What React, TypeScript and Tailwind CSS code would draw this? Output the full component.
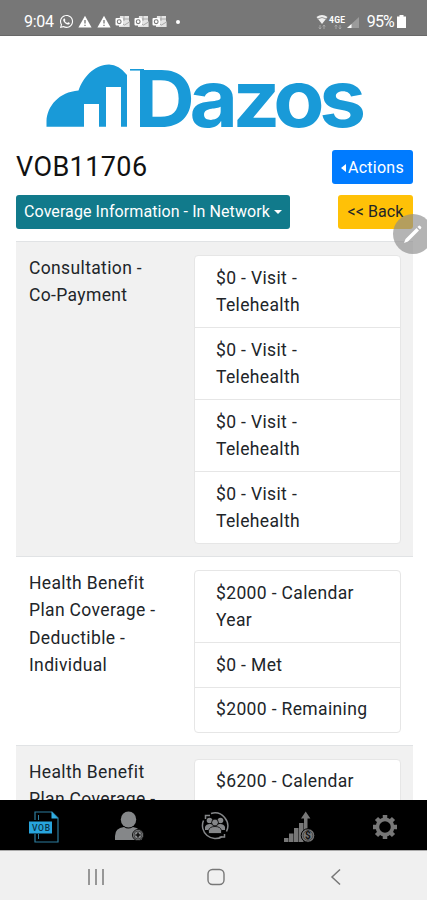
import clsx from "clsx";
import { FaWhatsapp } from "react-icons/fa";

const rows = [
  {
    lines: ["Consultation -", "Co-Payment"],
    items: [
      ["$0 - Visit -", "Telehealth"],
      ["$0 - Visit -", "Telehealth"],
      ["$0 - Visit -", "Telehealth"],
      ["$0 - Visit -", "Telehealth"],
    ],
  },
  {
    lines: ["Health Benefit", "Plan Coverage -", "Deductible -", "Individual"],
    items: [["$2000 - Calendar", "Year"], ["$0 - Met"], ["$2000 - Remaining"]],
  },
  {
    lines: ["Health Benefit", "Plan Coverage -"],
    items: [["$6200 - Calendar"]],
  },
];

export default function App() {
  return (
    <div className="relative flex h-[900px] w-full flex-col overflow-hidden bg-white font-['Roboto',sans-serif] text-[#212529]">
      <StatusBar />
      <main className="flex min-h-0 flex-1 flex-col overflow-hidden px-4">
        <Logo />
        <div className="mt-[21px] flex h-[34px] shrink-0 items-center justify-between">
          <h1 className="text-[27px] leading-[34px] font-normal tracking-[0.4px] text-[#111]">
            VOB11706
          </h1>
          <button className="-mr-0.5 flex h-[34px] w-[81px] items-center justify-center gap-[2px] rounded-[3px] bg-[#007bff] pt-px text-base tracking-[0.25px] text-white">
            <span className="border-y-[4px] border-r-[5px] border-y-transparent border-r-white" />
            Actions
          </button>
        </div>
        <div className="mt-[11px] flex h-[34px] shrink-0 justify-between">
          <button className="flex w-[274px] items-center justify-center gap-1 rounded-[3px] bg-[#117a8b] text-base tracking-[0.08px] whitespace-nowrap text-white">
            Coverage Information - In Network
            <span className="border-x-[4px] border-t-[4px] border-x-transparent border-t-white" />
          </button>
          <button className="-mr-0.5 w-[75px] rounded-[3px] bg-[#ffc107] text-base tracking-[0.1px] text-[#212529]">
            &lt;&lt; Back
          </button>
        </div>
        <div className="mt-3 -mr-0.5 flex flex-col">
          {rows.map((row, i) => (
            <CoverageRow key={i} {...row} striped={i % 2 === 0} />
          ))}
        </div>
      </main>
      <TabBar />
      <SystemNav />
      <div className="absolute top-[214px] left-[393px] flex size-10 items-center justify-center rounded-full bg-[#8c8c8c]/65">
        <svg width="20" height="20" viewBox="0 0 20 20" fill="#fff">
          <path d="M1 19l1.500-4L13.500 4l2.500 2.500L5 17.500z M14.500 3l1-1a1.200 1.200 0 0 1 1.700 0l.8.8a1.200 1.200 0 0 1 0 1.700L17 5.500z" />
        </svg>
      </div>
    </div>
  );
}

const CoverageRow = ({
  lines,
  items,
  striped,
}: {
  lines: string[];
  items: string[][];
  striped: boolean;
}) => {
  return (
    <div
      className={clsx(
        "flex shrink-0 border-t border-[#e1e3e5] text-[17.5px] leading-[27.2px] tracking-[0.36px]",
        striped && "bg-[#f1f1f1]"
      )}
    >
      <div className="w-[178px] shrink-0 pt-[13px] pl-[13px]">
        {lines.map((line) => (
          <div key={line}>{line}</div>
        ))}
      </div>
      <div className="mt-[13.3px] mr-3 mb-[11.8px] flex-1 rounded-[4px] border border-[#e6e6e6] bg-white">
        {items.map((item, i) => (
          <div
            key={i}
            className={clsx(
              "py-[8.3px] pl-[21px]",
              i > 0 && "border-t border-[#e6e6e6]"
            )}
          >
            {item.map((line) => (
              <div key={line} className="whitespace-nowrap">
                {line}
              </div>
            ))}
          </div>
        ))}
      </div>
    </div>
  );
};

const Warning = () => (
  <svg width="14" height="13" viewBox="0 0 14 13">
    <path d="M7 .8L13.6 12.5H.4z" fill="#fff" />
    <path d="M7 5v3.5M7 9.7v1.4" stroke="#777" strokeWidth="1.3" />
  </svg>
);

const OutlookMail = () => (
  <svg width="15" height="13" viewBox="0 0 15 13">
    <path d="M5 1h9v5l.6 1v5H4V9z" fill="#e4e4e4" />
    <path d="M4.5 7l5 3 5-3M9 1v5M5 4h9" stroke="#999" strokeWidth=".8" fill="none" />
    <rect x=".5" y="3" width="7.5" height="7.5" rx="1" fill="#fff" />
    <circle cx="4.2" cy="6.7" r="1.9" fill="none" stroke="#777" strokeWidth="1.1" />
  </svg>
);

const StatusBar = () => {
  return (
    <div className="flex h-9 shrink-0 items-center justify-between border-b border-[#686868] bg-[#777] pt-2 pr-[21px] pl-6 text-white">
      <div className="flex items-center">
        <span className="w-[35px] text-[16px] leading-5 tracking-[-0.3px]">9:04</span>
        <FaWhatsapp className="size-[15px]" />
        <div className="ml-[4px] flex items-center gap-[4.5px]">
          <Warning />
          <Warning />
          <div className="flex gap-[3.5px]">
            <OutlookMail />
            <OutlookMail />
            <OutlookMail />
          </div>
        </div>
        <span className="ml-[9px] size-1 rounded-full bg-white" />
      </div>
      <div className="flex items-center">
        <svg width="46" height="16" viewBox="0 0 46 16">
          <path d="M.5 3Q6-1 11.500 3L6 10z" fill="#eee" />
          <path d="M1.500 5Q6 2 10.500 5" stroke="#999" fill="none" />
          <path
            d="M4 11v4M2.800 13.500L4 15l1.200-1.500M8 15v-4M6.800 12.500L8 11l1.200 1.500M20 15v-4M24 11v4M18.800 12.500l1.200-1.500 1.200 1.500M22.800 13.500L24 15l1.200-1.500"
            stroke="#aaa"
            strokeWidth=".9"
            fill="none"
          />
          <text x="13" y="8.500" fontSize="8.5" fontWeight="700" fill="#fff" textLength="16">
            4GE
          </text>
          <path d="M43 3v11H31z" fill="#9b9b9b" />
          <path d="M35.500 10v4H31z" fill="#fff" />
        </svg>
        <span className="ml-[5px] text-[16px] leading-5 tracking-[-0.8px]">95%</span>
        <svg className="ml-[3px]" width="9" height="13" viewBox="0 0 9 13">
          <path d="M2.500 0h4v1.500H9V13H0V1.500h2.500z" fill="#fff" />
        </svg>
      </div>
    </div>
  );
};

const Logo = () => {
  return (
    <svg
      className="mt-7 ml-[30px] shrink-0 overflow-visible"
      width="318"
      height="65"
      viewBox="0 0 318 65"
      fill="#199ad8"
    >
      <path d="M.5 62.700V57C1.300 42 13 28 32.500 26.500C37 14 47 1 63 .5Q73 .5 81 11V62.700H75V23H60V62.700H53V40H38V62.700z" />
      <path d="M84 5h14v1.600H84z" />
      <text
        y="62.700"
        fontFamily="Inter, sans-serif"
        fontSize="79"
        fontWeight="700"
        transform="translate(88.500 0) scale(1.06 1)"
        letterSpacing="-5.2"
      >
        Dazos
      </text>
    </svg>
  );
};

const TabBar = () => {
  return (
    <nav className="flex h-[50px] shrink-0 items-center bg-black px-px pt-[3px]">
      <div className="flex flex-1 justify-center">
        <svg width="32" height="32" viewBox="0 0 32 32">
          <path d="M7 9V1h17l6 6v24H7v-8" fill="none" stroke="#2d7c9d" strokeWidth="1.200" />
          <path d="M10.500 4v5M10.500 23v5" stroke="#2d7c9d" />
          <path d="M23.500.5v7H30z" fill="#30aee4" />
          <rect x="1" y="10.500" width="23" height="12" fill="#28a5dd" />
          <text x="4" y="19.600" fontSize="8.500" fontWeight="500" fill="#0b3347" textLength="18">
            VOB
          </text>
        </svg>
      </div>
      <div className="flex flex-1 justify-center">
        <svg className="-mt-0.5" width="30" height="30" viewBox="0 0 30 30" fill="#858789">
          <ellipse cx="14.500" cy="8.500" rx="7.700" ry="8" />
          <path d="M1 29v-4q0-8 9-9 4 3 9 0 8 1 9 9v4z" />
          <circle cx="24" cy="24" r="5.500" fill="#858789" stroke="#111" />
          <circle cx="24" cy="24" r="4" fill="none" stroke="#333" strokeWidth=".8" />
          <path d="M24 21.500v5M21.500 24h5" stroke="#111" strokeWidth="1.600" />
        </svg>
      </div>
      <div className="flex flex-1 justify-center">
        <svg
          className="-mt-0.5 ml-0.5"
          width="30"
          height="30"
          viewBox="0 0 30 30"
          fill="#858789"
        >
          <path
            d="M11 2.500A13 13 0 0 1 26.500 20.500M22.500 25.500A13 13 0 0 1 3.500 9.500M10 4.500H5.500v3.500M19.500 26h5v-3"
            fill="none"
            stroke="#858789"
            strokeWidth="1.500"
          />
          <circle cx="9.500" cy="9.500" r="2.800" />
          <circle cx="20.500" cy="9.500" r="2.800" />
          <path d="M5 19v-3q1-3 5-3t5 3v3zM15 19v-3q1-3 5-3t5 3v3z" />
          <circle cx="15" cy="11.500" r="3.400" stroke="#000" strokeWidth=".8" />
          <path d="M8.500 22.500v-3q1-4 6.500-4t6.500 4v3z" stroke="#000" strokeWidth=".8" />
        </svg>
      </div>
      <div className="flex flex-1 justify-center">
        <svg width="32" height="32" viewBox="0 0 32 32" fill="#777">
          <path d="M1 27h4.500v4H1zM6 22.500h4.500V31H6zM11 17h4.500v14H11zM16 12h4.500v19H16zM21 6h3.500v16H21zM18 7.500L22.700.5l4.700 7z" />
          <circle cx="25" cy="24.500" r="6.800" fill="#777" stroke="#000" />
          <circle cx="25" cy="24.500" r="4.800" fill="none" stroke="#333" strokeWidth=".7" />
          <text x="22.100" y="28.200" fontSize="10" fontWeight="700" fill="#111">
            $
          </text>
        </svg>
      </div>
      <div className="flex flex-1 justify-center">
        <svg className="ml-0.5" width="26" height="26" viewBox="0 0 26 26" fill="none" stroke="#777">
          <circle cx="13" cy="13" r="7.600" strokeWidth="3.600" />
          <path
            d="M13 1v4M13 21v4M1 13h4M21 13h4M4.500 4.500l3 3M18.500 18.500l3 3M4.500 21.500l3-3M18.500 7.500l3-3"
            strokeWidth="4.500"
          />
        </svg>
      </div>
    </nav>
  );
};

const SystemNav = () => {
  return (
    <div className="flex h-[50px] shrink-0 items-center justify-between border-t border-[#aaa] bg-[#f0f0f0] pt-[2px] pr-[85px] pl-[87px]">
      <svg width="18" height="18" viewBox="0 0 18 18" stroke="#888" strokeWidth="1.700">
        <path d="M2 1v16M9 1v16M16 1v16" />
      </svg>
      <svg className="-ml-1" width="18" height="18" viewBox="0 0 18 18" fill="none" stroke="#777" strokeWidth="1.400">
        <rect x="1" y="1.500" width="16" height="15" rx="4.500" />
      </svg>
      <svg width="12" height="18" viewBox="0 0 12 18" fill="none" stroke="#777" strokeWidth="1.500">
        <path d="M10 1.500L2 9l8 7.500" />
      </svg>
    </div>
  );
};
